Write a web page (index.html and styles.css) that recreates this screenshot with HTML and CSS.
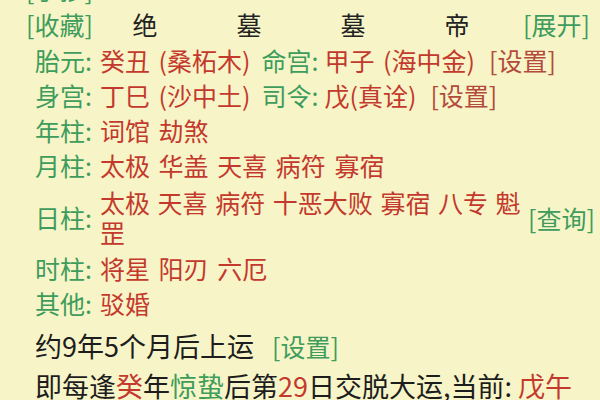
FILE: index.html
```html
<!DOCTYPE html>
<html lang="zh-CN">
<head>
  <meta charset="UTF-8" />
  <meta name="viewport" content="width=device-width, initial-scale=1.0" />
  <title>八字排盘</title>
  <link rel="stylesheet" href="styles.css">
</head>
<body>
  <div class="panel">
    <div class="row btn-row"><span class="link">[手抄]</span></div>

    <div class="row head-row">
      <span class="link">[收藏]</span>
      <span class="col">绝</span>
      <span class="col">墓</span>
      <span class="col">墓</span>
      <span class="col">帝</span>
      <span class="link more">[展开]</span>
    </div>

    <div class="row">
      <span class="label">胎元:</span>
      <span class="red">癸丑 (桑柘木)</span>
      <span class="label sub">命宫:</span>
      <span class="red">甲子 (海中金)</span>
      <span class="set">[设置]</span>
    </div>

    <div class="row">
      <span class="label">身宫:</span>
      <span class="red">丁巳 (沙中土)</span>
      <span class="label sub">司令:</span>
      <span class="red">戊(真诠)</span>
      <span class="set">[设置]</span>
    </div>

    <div class="row">
      <span class="label">年柱:</span>
      <span class="red">词馆 劫煞</span>
    </div>

    <div class="row">
      <span class="label">月柱:</span>
      <span class="red">太极 华盖 天喜 病符 寡宿</span>
    </div>

    <div class="row wrap-row">
      <span class="label">日柱:</span>
      <span class="red vals">太极 天喜 病符 十恶大败 寡宿 八专 魁罡</span>
      <span class="link side">[查询]</span>
    </div>

    <div class="row">
      <span class="label">时柱:</span>
      <span class="red">将星 阳刃 六厄</span>
    </div>

    <div class="row">
      <span class="label">其他:</span>
      <span class="red">驳婚</span>
    </div>

    <div class="luck">
      约9年5个月后上运 <span class="link small">[设置]</span>
    </div>

    <div class="luck last">
      即每逢<span class="red">癸</span>年<span class="green">惊蛰</span>后第<span class="red">29</span>日交脱大运,当前: <span class="red">戊午</span>
    </div>
  </div>
</body>
</html>
```

FILE: styles.css
```css
body {
  margin: 0;
  background: #f7f5c7;
  font-family: "Noto Sans CJK SC", "Noto Sans", sans-serif;
  color: #1d1d1d;
  overflow: hidden;
}

.panel {
  margin-top: -29px;
  padding: 0 6px 0 35px;
}

.row {
  display: flex;
  align-items: center;
  height: 35px;
  font-size: 25px;
  word-spacing: 3px;
  white-space: nowrap;
}

.btn-row,
.head-row {
  margin-left: -9px;
}

.head-row {
  height: 36px;
  margin-right: 4px;
}

.col {
  width: 104px;
  text-align: center;
  color: #222;
}

.link {
  color: #3e9c5c;
}

.more {
  margin-left: auto;
}

.label {
  color: #3e9c5c;
  width: 65px;
  flex-shrink: 0;
}

.label.sub {
  width: auto;
  margin-left: 11px;
  margin-right: 6px;
}

.red {
  color: #c4392d;
}

.set {
  color: #b34a3c;
  margin-left: 14px;
}

.wrap-row {
  height: 68px;
  padding-top: 2px;
  box-sizing: border-box;
  word-spacing: 2px;
}

.wrap-row .vals {
  width: 428px;
  flex-shrink: 0;
  white-space: normal;
  line-height: 30px;
}

.side {
  margin: 2px 2px 0 auto;
  flex-shrink: 0;
}

.luck {
  font-size: 27px;
  height: 36px;
  line-height: 36px;
  margin-top: 8px;
  white-space: nowrap;
}

.luck .small {
  font-size: 25px;
  margin-left: 12px;
}

.luck.last {
  margin-top: 2px;
  height: 40px;
  line-height: 40px;
}

.green {
  color: #3e9c5c;
}
```
